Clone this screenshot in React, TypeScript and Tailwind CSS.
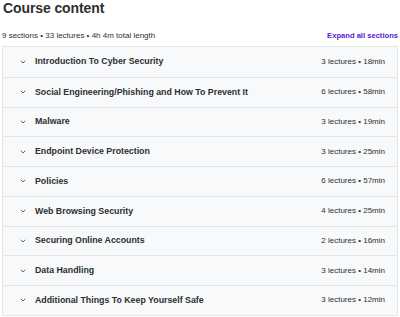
import { ChevronDown } from 'lucide-react';

const sections = [
  { title: 'Introduction To Cyber Security', meta: '3 lectures • 18min' },
  { title: 'Social Engineering/Phishing and How To Prevent It', meta: '6 lectures • 58min' },
  { title: 'Malware', meta: '3 lectures • 19min' },
  { title: 'Endpoint Device Protection', meta: '3 lectures • 25min' },
  { title: 'Policies', meta: '6 lectures • 57min' },
  { title: 'Web Browsing Security', meta: '4 lectures • 25min' },
  { title: 'Securing Online Accounts', meta: '2 lectures • 16min' },
  { title: 'Data Handling', meta: '3 lectures • 14min' },
  { title: 'Additional Things To Keep Yourself Safe', meta: '3 lectures • 12min' },
];

export default function App() {
  return (
    <div
      className="w-[400px] h-[317px] overflow-hidden bg-white text-[#2d2f31] px-[2px]"
      style={{ fontFamily: '"Liberation Sans", Arial, sans-serif' }}
    >
      <div className="h-[17px] pl-[1px] text-[14px] font-bold leading-[17px] tracking-[-0.1px]">Course content</div>

      <div className="mt-[12px] flex h-[13px] items-center justify-between">
        <div className="text-[8px] text-[#2d2f31]">9 sections • 33 lectures • 4h 4m total length</div>
        <button type="button" className="text-[7.6px] font-bold text-[#5624d0]">
          Expand all sections
        </button>
      </div>

      <div className="mt-[4px] border border-[#e2e6e9]">
        {sections.map((s, i) => (
          <div
            key={s.title}
            className={[
              'flex h-[29.75px] items-center justify-between bg-[#f7f9fa] pl-[16px] pr-[12px]',
              i > 0 ? 'border-t border-[#e2e6e9]' : '',
            ].join(' ')}
          >
            <div className="flex items-center gap-[8px]">
              <ChevronDown size={8} strokeWidth={2.2} className="text-[#2d2f31]" />
              <span className="text-[8.8px] font-bold">{s.title}</span>
            </div>
            <span className="text-[8px]">{s.meta}</span>
          </div>
        ))}
      </div>
    </div>
  );
}
